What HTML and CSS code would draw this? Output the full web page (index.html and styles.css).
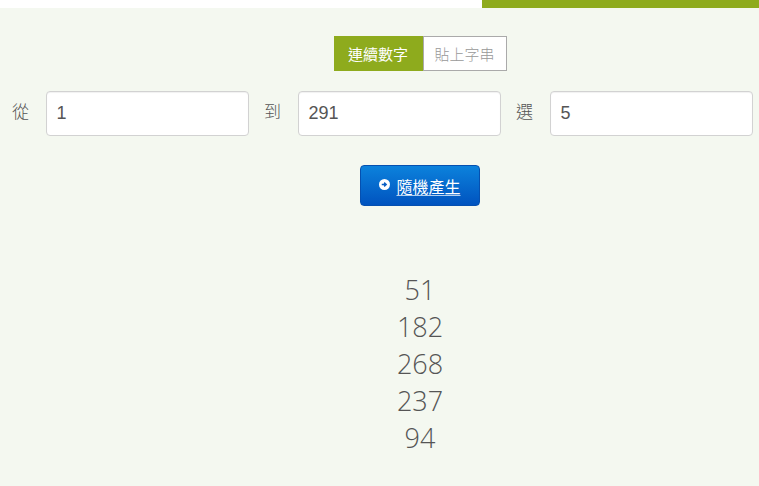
FILE: index.html
```html
<!DOCTYPE html>
<html lang="zh-Hant">
<head>
<meta charset="utf-8">
<title>隨機產生</title>
<link rel="stylesheet" href="styles.css">
</head>
<body>
<div class="topbar"><div class="top-left"></div><div class="top-right"></div></div>
<main class="main">
  <div class="centered">
    <div class="toggle">
      <span class="tab active">連續數字</span><span class="tab">貼上字串</span>
    </div>
  </div>
  <div class="fields">
    <label class="lbl">從</label><div class="input">1</div>
    <label class="lbl">到</label><div class="input">291</div>
    <label class="lbl">選</label><div class="input">5</div>
  </div>
  <div class="centered">
    <button class="btn"><span class="ico"><svg viewBox="0 0 12 12" width="11" height="11"><circle cx="6" cy="6" r="6" fill="#fff"/><path d="M3 6h4.2M5.6 4l2.2 2-2.2 2" stroke="#0a5fc4" stroke-width="1.6" fill="none"/></svg></span><span class="btn-text">隨機產生</span></button>
  </div>
  <div class="centered">
    <ul class="results">
      <li>51</li><li>182</li><li>268</li><li>237</li><li>94</li>
    </ul>
  </div>
</main>
</body>
</html>
```
FILE: styles.css
```css
html, body { margin: 0; padding: 0; }
body {
  background: #f4f8f0;
  font-family: "Liberation Sans", "Noto Sans CJK TC", sans-serif;
  color: #555;
  width: 759px;
  height: 486px;
  overflow: hidden;
}
.topbar { display: flex; height: 8px; }
.top-left { width: 482px; background: #fff; }
.top-right { flex: 1; background: #8eab1d; }
.main { padding-top: 28px; }
.centered { display: flex; justify-content: center; padding-left: 81px; }
.toggle { display: flex; height: 35px; }
.tab {
  display: flex; align-items: center; justify-content: center;
  font-family: "Noto Sans CJK TC", sans-serif;
  font-weight: 300;
  font-size: 15px;
  box-sizing: border-box;
  height: 35px;
  border: 1px solid #aaa;
  background: #fff;
  color: #999;
  width: 84px;
}
.tab.active {
  width: 89px;
  background: #8eab1d;
  border-color: #8eab1d;
  color: #fff;
  font-weight: 400;
}
.fields {
  display: grid;
  grid-template-columns: 18px 203px 18px 203px 18px 203px;
  column-gap: 15.5px;
  align-items: center;
  padding-left: 12px;
  margin-top: 20px;
}
.lbl {
  font-family: "Noto Sans CJK TC", sans-serif;
  font-weight: 300;
  font-size: 17px;
  color: #555;
  margin-top: -6px;
}
.input {
  box-sizing: border-box;
  height: 45px;
  background: #fff;
  border: 1px solid #d2d2d2;
  border-radius: 4px;
  box-shadow: inset 0 1px 1px rgba(0,0,0,0.06);
  display: flex; align-items: center;
  padding-left: 10px;
  font-size: 18px;
  color: #555;
}
.btn {
  margin-top: 29px;
  width: 120px; height: 41px;
  border: 1px solid #0550b0;
  border-radius: 4px;
  background: linear-gradient(#0c82dc, #0053bf);
  color: #fff;
  display: flex; align-items: center; justify-content: center;
  gap: 6px;
  font-family: "Noto Sans CJK TC", sans-serif;
  font-size: 16px;
  padding: 0;
}
.ico { display: flex; margin-top: -2px; }
.btn-text { text-decoration: underline; text-decoration-thickness: 1px; text-underline-offset: 2px; text-decoration-color: rgba(255,255,255,0.7); }
.results {
  list-style: none;
  margin: 65px 0 0;
  padding: 0;
  text-align: center;
  font-family: "Open Sans", sans-serif;
  font-weight: 300;
  font-size: 27px;
  line-height: 37px;
  color: #555;
}
```
